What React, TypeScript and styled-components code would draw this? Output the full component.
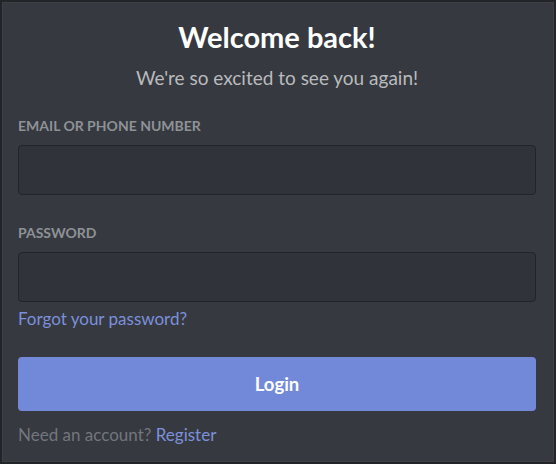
import React from "react";
import styled, { createGlobalStyle } from "styled-components";

const Global = createGlobalStyle`
  html, body { margin: 0; padding: 0; background: #202225; }
  * { box-sizing: border-box; }
`;

const Frame = styled.div`
  width: 556px;
  height: 464px;
  background: #36393f;
  border: 2px solid #222427;
  box-shadow: inset 0 0 0 1px #3d4046;
  font-family: "Lato", "Noto Sans", sans-serif;
  padding: 16px 18px 0 16px;
  display: flex;
  flex-direction: column;
`;

const Title = styled.h1`
  margin: 0;
  text-align: center;
  color: #ffffff;
  font-size: 29px;
  font-weight: 700;
  line-height: 38px;
`;

const Subtitle = styled.p`
  margin: 10px 0 0 0;
  text-align: center;
  color: #b9bbbe;
  font-size: 19px;
  font-weight: 400;
  line-height: 24px;
`;

const Field = styled.div<{ $top: number }>`
  display: flex;
  flex-direction: column;
  margin-top: ${(p) => p.$top}px;
`;

const Label = styled.label`
  color: #8e9297;
  font-size: 14px;
  font-weight: 700;
  line-height: 18px;
  text-transform: uppercase;
`;

const Input = styled.input`
  margin-top: 10px;
  height: 50px;
  width: 100%;
  background: #303339;
  border: 1px solid #222428;
  border-radius: 4px;
  outline: none;
  color: #dcddde;
  font-family: inherit;
  font-size: 18px;
  padding: 0 12px;
`;

const Link = styled.a`
  color: #7c90db;
  text-decoration: none;
  cursor: pointer;
`;

const Forgot = styled(Link)`
  display: block;
  margin-top: 6px;
  font-size: 17px;
  line-height: 22px;
  align-self: flex-start;
`;

const Button = styled.button`
  margin-top: 27px;
  height: 54px;
  width: 100%;
  border: none;
  border-radius: 4px;
  background: #7289da;
  color: #ffffff;
  font-family: inherit;
  font-size: 18.5px;
  font-weight: 700;
  cursor: pointer;
`;

const Footer = styled.p`
  margin: 13px 0 0 0;
  color: #72767d;
  font-size: 17px;
  line-height: 22px;
`;

export default function App() {
  return (
    <>
      <Global />
      <Frame>
        <Title>Welcome back!</Title>
        <Subtitle>We're so excited to see you again!</Subtitle>
        <Field $top={27}>
          <Label>Email or Phone Number</Label>
          <Input type="text" />
        </Field>
        <Field $top={29}>
          <Label>Password</Label>
          <Input type="password" />
        </Field>
        <Forgot>Forgot your password?</Forgot>
        <Button>Login</Button>
        <Footer>
          Need an account? <Link>Register</Link>
        </Footer>
      </Frame>
    </>
  );
}
